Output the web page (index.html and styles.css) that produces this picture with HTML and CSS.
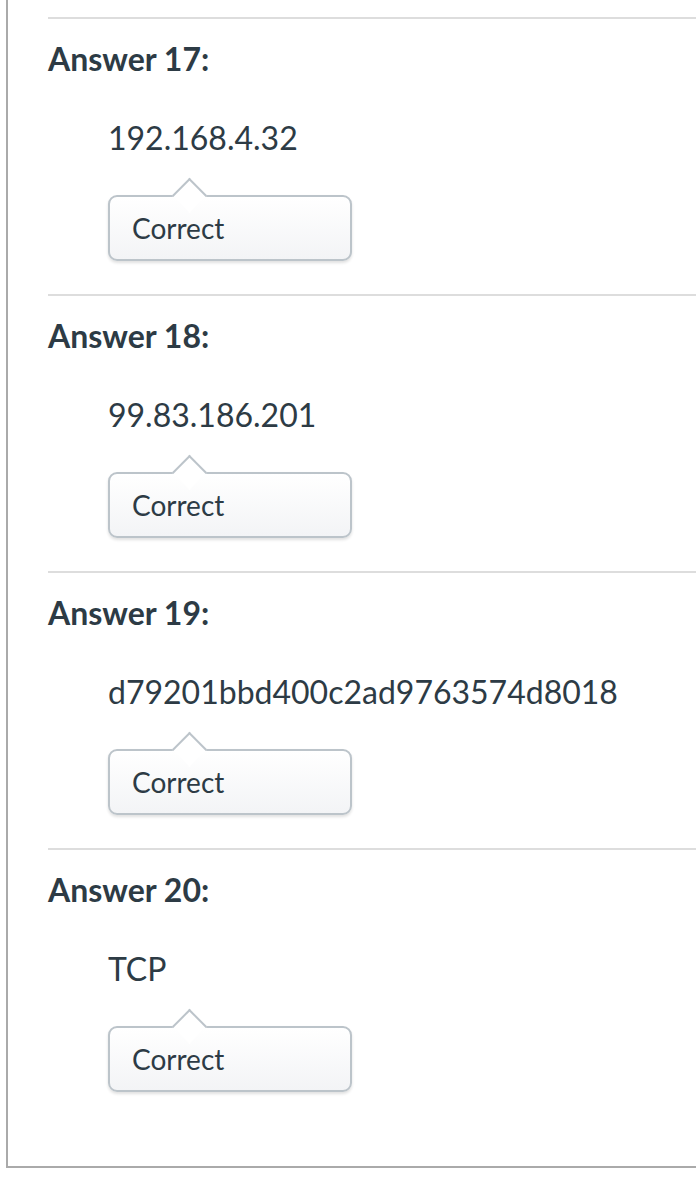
FILE: index.html
```html
<!DOCTYPE html>
<html lang="en">
<head>
<meta charset="utf-8">
<title>Quiz answers</title>
<link rel="stylesheet" href="styles.css">
</head>
<body>
<div class="results">
  <section class="answer">
    <h3 class="answer-title">Answer 17:</h3>
    <div class="answer-text">192.168.4.32</div>
    <div class="verdict">Correct</div>
  </section>
  <section class="answer">
    <h3 class="answer-title">Answer 18:</h3>
    <div class="answer-text">99.83.186.201</div>
    <div class="verdict">Correct</div>
  </section>
  <section class="answer">
    <h3 class="answer-title">Answer 19:</h3>
    <div class="answer-text">d79201bbd400c2ad9763574d8018</div>
    <div class="verdict">Correct</div>
  </section>
  <section class="answer answer-last">
    <h3 class="answer-title">Answer 20:</h3>
    <div class="answer-text">TCP</div>
    <div class="verdict">Correct</div>
  </section>
</div>
</body>
</html>
```
FILE: styles.css
```css
html, body {
  margin: 0;
  padding: 0;
  background: #ffffff;
  overflow: hidden;
}

body {
  font-family: Lato, "Open Sans", sans-serif;
  color: #2d3b45;
}

.results {
  margin-left: 6px;
  padding-top: 17px;
  border-left: 2px solid #aaaaaa;
  border-bottom: 2px solid #aaaaaa;
  height: 1168px;
  box-sizing: border-box;
}

.answer {
  margin-left: 40px;
  border-top: 2px solid #dddddd;
  padding-top: 20px;
  padding-bottom: 33px;
}

.answer-title {
  margin: 0;
  font-size: 32px;
  line-height: 40px;
  font-weight: 700;
}

.answer-text {
  margin: 40px 0 0 60px;
  font-size: 32px;
  line-height: 38px;
}

.verdict {
  position: relative;
  box-sizing: border-box;
  width: 244px;
  height: 66px;
  margin: 38px 0 0 60px;
  padding-left: 22px;
  display: flex;
  align-items: center;
  font-size: 28px;
  border: 2px solid #bcc4ca;
  border-radius: 9px;
  background: linear-gradient(#ffffff, #f3f4f6);
  box-shadow: 0 2px 3px rgba(0, 0, 0, 0.12);
}

.verdict::before {
  content: "";
  position: absolute;
  left: 67px;
  top: -14px;
  width: 25px;
  height: 25px;
  background: #ffffff;
  border-top: 2px solid #bcc4ca;
  border-left: 2px solid #bcc4ca;
  transform: rotate(45deg);
  box-sizing: border-box;
}
```
